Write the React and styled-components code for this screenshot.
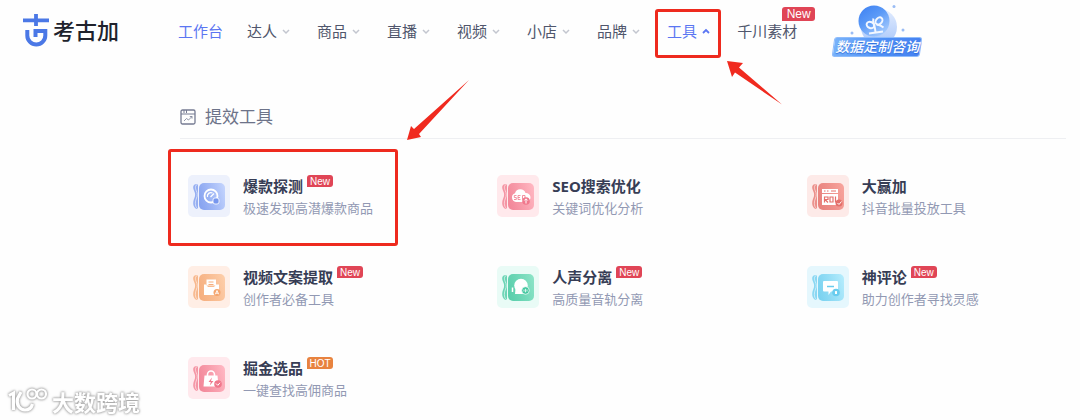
import React from "react";
import styled, { createGlobalStyle } from "styled-components";

const GlobalStyle = createGlobalStyle`
  * {
    box-sizing: border-box;
  }

  body {
    margin: 0;
    background: #fefefe;
    color: #40465e;
    font-family: "Noto Sans", "Noto Sans CJK SC", sans-serif;
    font-size: 15px;
  }

  button {
    padding: 0;
    border: 0;
    background: none;
    font: inherit;
    cursor: pointer;
  }

  a {
    color: inherit;
    text-decoration: none;
  }
`;

// header

const Header = styled.header`
  display: flex;
  align-items: center;
  height: 62px;
  padding-left: 22px;
  white-space: nowrap;
`;

const Brand = styled.a`
  display: flex;
  align-items: center;
  gap: 3px;
  width: 156px;
  color: #20222c;
  font-family: "Noto Sans CJK SC", sans-serif;
  font-size: 22px;
  font-weight: 500;
  line-height: 32px;

  span {
    margin-bottom: 4px;
  }
`;

const Nav = styled.nav`
  display: flex;
  gap: 24px;
`;

const NavItem = styled.div`
  position: relative;
  color: ${(props) => (props.$active ? "#5b76f2" : "#50566c")};
  line-height: 24px;
`;

const NavButton = styled.button`
  display: flex;
  align-items: center;
  gap: 4px;
  color: inherit;
`;

const Badge = styled.span`
  display: inline-block;
  width: ${(props) => (props.$large ? 33 : 26)}px;
  height: ${(props) => (props.$large ? 14 : 12)}px;
  border-radius: 3px 3px 3px 0;
  background: ${(props) => (props.$hot ? "#e8833f" : "#e04556")};
  color: #fff;
  font-family: "Liberation Sans", sans-serif;
  font-size: ${(props) => (props.$large ? 12 : 10)}px;
  font-weight: 400;
  line-height: ${(props) => (props.$large ? 15 : 13)}px;
  text-align: center;
`;

const NavBadge = styled.span`
  position: absolute;
  top: -12px;
  right: -18px;
  display: flex;
`;

const Promo = styled.button`
  display: flex;
  flex-direction: column;
  align-items: center;
  width: 90px;
  margin-left: 35px;
`;

const Ribbon = styled.span`
  position: relative;
  z-index: 0;
  width: 88px;
  height: 20px;
  margin-top: -6px;
  color: #fff;
  font-family: "Noto Sans CJK SC", sans-serif;
  font-size: 14px;
  font-style: italic;
  font-weight: 500;
  line-height: 19px;
  text-align: center;
  text-shadow: 0 1px 1px #2f6fdc;

  &::before {
    content: "";
    position: absolute;
    inset: 0;
    z-index: -1;
    border: 1px solid #8fbcfb;
    border-radius: 3px;
    background: linear-gradient(90deg, #78b2fa, #4f90f6 55%, #4682f1);
    transform: skewX(-8deg);
  }
`;

// tool panel

const Panel = styled.main`
  padding: 43px 14px 16px 180px;
`;

const PanelTitle = styled.h2`
  display: flex;
  align-items: center;
  gap: 9px;
  margin: 0;
  padding-bottom: 9px;
  border-bottom: 1px solid #eeeff2;
  color: #6d7389;
  font-size: 17px;
  font-weight: 400;
  line-height: 24px;
`;

const ToolGrid = styled.div`
  display: grid;
  grid-template-columns: repeat(3, 1fr);
  gap: 47px 50px;
  padding: 36px 0 0 8px;
`;

const ToolCard = styled.div`
  position: relative;
`;

const ToolLink = styled.a`
  display: flex;
  gap: 13px;
`;

const ToolName = styled.div`
  display: flex;
  gap: 4px;
  color: #373d55;
  font-weight: 700;
  line-height: 22px;
  white-space: nowrap;
`;

const ToolNote = styled.div`
  color: #9299b3;
  font-size: 13px;
  line-height: 22px;
  white-space: nowrap;
`;

// red marks drawn over the page

const NavMark = styled.span`
  position: absolute;
  inset: -10px -8px -15px -12px;
  border: 3px solid #ee2a1e;
  border-radius: 3px;
  pointer-events: none;
`;

const CardMark = styled.span`
  position: absolute;
  top: -26px;
  left: -20px;
  width: 230px;
  height: 97px;
  border: 3px solid #ee2a1e;
  border-radius: 3px;
  pointer-events: none;
`;

const Arrow = styled.svg`
  position: absolute;
  top: ${(props) => props.$top}px;
  left: ${(props) => props.$left}px;
  fill: #f02a1f;
  pointer-events: none;
`;

const Watermark = styled.div`
  position: fixed;
  bottom: 5px;
  left: 8px;
  display: flex;
  align-items: center;
  gap: 4px;
  color: #fff;
  font-family: "Noto Sans CJK SC", sans-serif;
  font-size: 22px;
  font-weight: 700;
  line-height: 28px;
  filter: drop-shadow(0 0 1px #a0a0a0) drop-shadow(0 0 1px #b8b8b8);
`;

const BrandIcon = () => (
  <svg width="28" height="34" viewBox="0 0 28 34" fill="none" stroke="#4b78e6">
    <path d="M1 6.3H27M14 0V12" strokeWidth="3.8" />
    <path
      d="M5.3 16v5.5a9 9 0 0 0 18 0V17H13.5v6"
      strokeWidth="4"
    />
  </svg>
);

const Chevron = ({ up }) => (
  <svg width="12" height="12" viewBox="0 0 12 12" fill="none">
    <path
      d={up ? "M2 8L5 5L8 8" : "M2 5L5 8L8 5"}
      stroke={up ? "#5b76f2" : "#c3c6cf"}
      strokeWidth={up ? 1.8 : 1.5}
    />
  </svg>
);

const PanelIcon = () => (
  <svg width="16" height="16" viewBox="0 0 16 16" fill="none" stroke="#757b92">
    <rect x="1" y="1" width="14" height="14" rx="1.5" strokeWidth="1.3" />
    <path d="M1 5H15M4 1V4M6.5 1V4" />
    <path d="M4 12L6.5 9.5L8.5 11L12 7.5M9.8 7.5H12V9.6" strokeWidth="0.8" />
  </svg>
);

const PromoIcon = () => (
  <svg width="60" height="38" viewBox="0 0 60 38">
    <defs>
      <linearGradient id="orb" x1="0" y1="0" x2="0.7" y2="1">
        <stop offset="0" stopColor="#3c7ff2" />
        <stop offset="0.5" stopColor="#5b9af7" />
        <stop offset="1" stopColor="#a6cbfd" />
      </linearGradient>
      <linearGradient id="halo" x1="0" y1="0" x2="0" y2="1">
        <stop offset="0" stopColor="#e2ecfe" />
        <stop offset="1" stopColor="#a9c7fa" />
      </linearGradient>
    </defs>
    <circle cx="32" cy="22" r="18" fill="url(#halo)" />
    <circle cx="27" cy="16" r="15.5" fill="url(#orb)" />
    <g fill="none" stroke="#f2f7ff" strokeWidth="2">
      <ellipse cx="23.5" cy="20" rx="4" ry="3" transform="rotate(25 23.5 20)" />
      <ellipse cx="32" cy="16" rx="4" ry="3" transform="rotate(-50 32 16)" />
      <path d="M26.5 13.500C25 17 28 20 28.500 27M29.500 20C32 19 34 20.500 36.500 22.500M22 28.500L36 26.500" />
    </g>
    <g fill="#9abcf4">
      <circle cx="47" cy="1.5" r="1.5" />
      <circle cx="5" cy="28" r="1.5" />
      <circle cx="56" cy="25" r="1.500" />
    </g>
  </svg>
);

const glyphs = {
  gauge: (color) => (
    <>
      <circle cx="23" cy="21" r="6.5" fill="none" stroke="#fff" strokeWidth="1.8" />
      <path d="M19.5 22a3.5 3.5 0 0 1 5-4M22.5 22L26 18.5" fill="none" stroke="#fff" strokeWidth="1.3" />
      <rect x="25" y="23" width="6" height="6" rx="2" fill={color} stroke="#fff" strokeWidth="0.8" />
    </>
  ),
  cloud: (color) => (
    <>
      <path d="M19 27a4.5 4.5 0 0 1-1-8.7a5.5 5.5 0 0 1 10.5-.3a4.5 4.5 0 0 1 1 9z" fill="#fff" />
      <path d="M19.5 20.5h-2.2v2h2v2h-2.3M23.5 20.5h-2.5v4h2.5M21 22.5h2M25.5 20.5h2.5v4h-2.5z" fill="none" stroke={color} strokeWidth="0.8" />
      <circle cx="29" cy="26" r="3.8" fill={color} />
      <path d="M29 28.5V24M27.3 25.5L29 23.8L30.7 25.5" fill="none" stroke="#fff" />
    </>
  ),
  roi: (color) => (
    <>
      <path d="M15 14h16v4H15zM15 19h16v11H15z" fill="#fff" />
      <path d="M17 16h1.5M20 16h1.500M24 16h5" stroke={color} />
      <path d="M17.500 27.500v-5.500h3.500v2.500h-3l3 3M23 22h3v5h-3zM28.500 21.500v6" fill="none" stroke={color} strokeWidth="1.2" />
      <circle cx="32" cy="28" r="3.5" fill={color} />
      <path d="M30.500 28l1.500 1.500l2.500-3" fill="none" stroke="#fff" />
    </>
  ),
  document: (color) => (
    <>
      <path d="M18.5 13.500h9.500v6h-9.500z" fill="#fff" />
      <path d="M16 18.500h2l2 2.500h6l2-2.500h3V29H16z" fill="#fff" />
      <path d="M20.5 16h5M20.5 18.500h5" stroke={color} strokeWidth="0.9" />
      <circle cx="29" cy="26.5" r="3.5" fill={color} />
      <path d="M27.3 28.3L29 24.5L30.7 28.3M28 27.2h2" fill="none" stroke="#fff" strokeWidth="0.9" />
    </>
  ),
  voice: (color) => (
    <>
      <circle cx="24" cy="19.5" r="6.8" fill="#fff" />
      <path d="M18.500 23l-.5 5h10v-5z" fill="#fff" />
      <path d="M15.5 21.500v4.500" stroke="#fff" strokeWidth="1.5" />
      <circle cx="28.5" cy="24.5" r="3.8" fill={color} stroke="#fff" strokeWidth="0.7" />
      <path d="M27 23.5v2M28.5 22.8v3.5M30 23.5v2" stroke="#fff" strokeWidth="0.8" />
    </>
  ),
  comment: (color) => (
    <>
      <path d="M17 15h13a1 1 0 0 1 1 1v9.5h-7L21.5 29v-3.5H17a1 1 0 0 1-1-1V16a1 1 0 0 1 1-1z" fill="#fff" />
      <path d="M20 20.5h7" stroke={color} strokeWidth="1.5" />
      <circle cx="29" cy="26.5" r="3.8" fill={color} />
      <path d="M28 26.5c-1-2 3-2 2 0v1.5h-2zM28.3 29.3h1.5" fill="#fff" />
    </>
  ),
  bag: (color) => (
    <>
      <path d="M16.5 18.5h13l1 11h-15z" fill="#fff" />
      <path d="M19.5 20v-2.5a3.5 3.5 0 0 1 7 0V20" fill="none" stroke="#fff" strokeWidth="1.6" />
      <path d="M24 20.5L20.5 25h2.3l-1 3.5L25.5 24H23z" fill={color} />
      <circle cx="30" cy="27" r="3.8" fill={color} />
      <path d="M28 26.5l1.8 1.8l2.2-2.5" fill="none" stroke="#fff" />
    </>
  ),
};

const ToolIcon = ({ glyph, tint, light, color }) => (
  <svg width="42" height="42" viewBox="0 0 42 42">
    <defs>
      <linearGradient id={glyph} x1="0" y1="0.6" x2="1" y2="0.3">
        <stop offset="0" stopColor={color} stopOpacity="0.85" />
        <stop offset="1" stopColor={light} />
      </linearGradient>
    </defs>
    <rect width="42" height="42" rx="5" fill={tint} />
    <path
      d="M9 9c-4 0-4.500 3-3 6.500s1.500 5 0 8.500s-1 9 3 10h1V9z"
      fill={color}
      opacity="0.75"
    />
    <path
      d="M10 9c-3 1-3 4-1.800 6.500s1.500 5 0 8.500s-1 9 2 10"
      fill="none"
      stroke={tint}
      strokeWidth="0.7"
    />
    <rect x="10" y="7" width="28" height="29" rx="6" fill={tint} />
    <rect x="11" y="8" width="26" height="27" rx="5" fill={`url(#${glyph})`} />
    {glyphs[glyph](color)}
  </svg>
);

const WatermarkIcon = () => (
  <svg width="40" height="28" viewBox="0 0 40 28" fill="none" stroke="#fff">
    <path d="M1 8.5L5.500 6V23" strokeWidth="3" />
    <path d="M13 5L9.500 11.500C8 18 12 23 17 23c4 0 6.500-2 7.500-6" strokeWidth="3.2" />
    <circle cx="24" cy="7" r="4.5" strokeWidth="2.2" />
    <circle cx="33.5" cy="7" r="4.5" strokeWidth="2.2" />
  </svg>
);

const menus = ["达人", "商品", "直播", "视频", "小店", "品牌"];

const tools = [
  { name: "爆款探测", note: "极速发现高潜爆款商品", badge: "New", marked: true, glyph: "gauge", tint: "#edf1fc", light: "#c1d2fd", color: "#7797ee" },
  { name: "SEO搜索优化", note: "关键词优化分析", glyph: "cloud", tint: "#ffe9ec", light: "#ffb5c0", color: "#f0788c" },
  { name: "大赢加", note: "抖音批量投放工具", glyph: "roi", tint: "#fdeae8", light: "#f7a29b", color: "#e4706b" },
  { name: "视频文案提取", note: "创作者必备工具", badge: "New", glyph: "document", tint: "#ffeee5", light: "#fdcda8", color: "#f4a56f" },
  { name: "人声分离", note: "高质量音轨分离", badge: "New", glyph: "voice", tint: "#e9fbf6", light: "#8ae3c6", color: "#42c79f" },
  { name: "神评论", note: "助力创作者寻找灵感", badge: "New", glyph: "comment", tint: "#e5f7fd", light: "#b2ebfc", color: "#69ccee" },
  { name: "掘金选品", note: "一键查找高佣商品", badge: "HOT", glyph: "bag", tint: "#ffe9ed", light: "#ffb6c2", color: "#f0788c" },
];

const App = () => {
  return (
    <>
      <GlobalStyle />
      <Header>
        <Brand href="#">
          <BrandIcon />
          <span>考古加</span>
        </Brand>
        <Nav>
          <NavItem $active>
            <a href="#">工作台</a>
          </NavItem>
          {menus.map((menu) => (
            <NavItem key={menu}>
              <NavButton type="button">
                {menu}
                <Chevron />
              </NavButton>
            </NavItem>
          ))}
          <NavItem $active>
            <NavButton type="button" aria-expanded="true">
              工具
              <Chevron up />
            </NavButton>
            <NavMark />
            <Arrow $top={42} $left={60} width="56" height="45" viewBox="0 0 56 45">
              <path d="M0 0L16 2L12 6.500L55 43.500L8 11.500L5 16Z" />
            </Arrow>
          </NavItem>
          <NavItem>
            <a href="#">千川素材</a>
            <NavBadge>
              <Badge $large>New</Badge>
            </NavBadge>
          </NavItem>
        </Nav>
        <Promo type="button">
          <PromoIcon />
          <Ribbon>数据定制咨询</Ribbon>
        </Promo>
      </Header>
      <Panel>
        <PanelTitle>
          <PanelIcon />
          提效工具
        </PanelTitle>
        <ToolGrid>
          {tools.map(({ name, note, badge, marked, ...icon }) => (
            <ToolCard key={name}>
              <ToolLink href="#">
                <ToolIcon {...icon} />
                <div>
                  <ToolName>
                    {name}
                    {badge && <Badge $hot={badge === "HOT"}>{badge}</Badge>}
                  </ToolName>
                  <ToolNote>{note}</ToolNote>
                </div>
              </ToolLink>
              {marked && (
                <>
                  <CardMark />
                  <Arrow $top={-96} $left={218} width="64" height="62" viewBox="0 0 64 62">
                    <path d="M1 61L5 47L8 50L63 1L13 55L15 58Z" />
                  </Arrow>
                </>
              )}
            </ToolCard>
          ))}
        </ToolGrid>
      </Panel>
      <Watermark>
        <WatermarkIcon />
        <span>大数跨境</span>
      </Watermark>
    </>
  );
};

export default App;
